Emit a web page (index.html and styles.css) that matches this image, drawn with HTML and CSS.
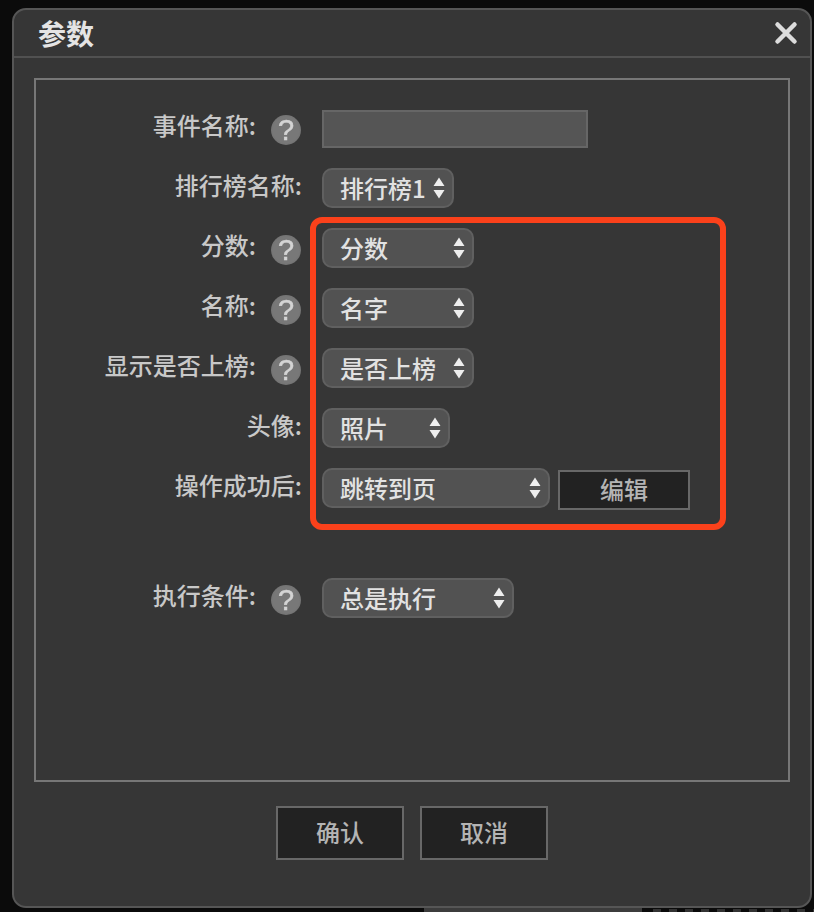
FILE: index.html
```html
<!DOCTYPE html>
<html lang="zh">
<head>
<meta charset="utf-8">
<title>参数</title>
<link rel="stylesheet" href="styles.css">
</head>
<body>
<div class="backdrop">
  <div class="under-bar"></div>
  <div class="under-dots"></div>
</div>
<div class="dialog">
  <header class="head">
    <h1 class="title">参数</h1>
    <svg class="close" width="24" height="24" viewBox="0 0 24 24"><path d="M3.500 3.500L20.500 20.500M20.500 3.500L3.500 20.500" stroke="#dcdcdc" stroke-width="4.500" stroke-linecap="round"/></svg>
  </header>
  <div class="panel">
    <div class="form">
      <div class="row">
        <div class="label"><span>事件名称:</span><span class="help">?</span></div>
        <input class="text-input" type="text">
      </div>
      <div class="row">
        <div class="label"><span>排行榜名称:</span></div>
        <div class="select w-132"><span>排行榜1</span><svg class="arrows" width="14" height="24" viewBox="0 0 14 24"><path d="M7 1.500L12.500 10H1.500Z M7 22.500L12.500 14H1.500Z" fill="#eee"/></svg></div>
      </div>
      <div class="row">
        <div class="label"><span>分数:</span><span class="help">?</span></div>
        <div class="select w-152"><span>分数</span><svg class="arrows" width="14" height="24" viewBox="0 0 14 24"><path d="M7 1.500L12.500 10H1.500Z M7 22.500L12.500 14H1.500Z" fill="#eee"/></svg></div>
      </div>
      <div class="row">
        <div class="label"><span>名称:</span><span class="help">?</span></div>
        <div class="select w-152"><span>名字</span><svg class="arrows" width="14" height="24" viewBox="0 0 14 24"><path d="M7 1.500L12.500 10H1.500Z M7 22.500L12.500 14H1.500Z" fill="#eee"/></svg></div>
      </div>
      <div class="row">
        <div class="label"><span>显示是否上榜:</span><span class="help">?</span></div>
        <div class="select w-152"><span>是否上榜</span><svg class="arrows" width="14" height="24" viewBox="0 0 14 24"><path d="M7 1.500L12.500 10H1.500Z M7 22.500L12.500 14H1.500Z" fill="#eee"/></svg></div>
      </div>
      <div class="row">
        <div class="label"><span>头像:</span></div>
        <div class="select w-128"><span>照片</span><svg class="arrows" width="14" height="24" viewBox="0 0 14 24"><path d="M7 1.500L12.500 10H1.500Z M7 22.500L12.500 14H1.500Z" fill="#eee"/></svg></div>
      </div>
      <div class="row">
        <div class="label"><span>操作成功后:</span></div>
        <div class="select w-228"><span>跳转到页</span><svg class="arrows" width="14" height="24" viewBox="0 0 14 24"><path d="M7 1.500L12.500 10H1.500Z M7 22.500L12.500 14H1.500Z" fill="#eee"/></svg></div>
        <button class="btn btn-edit" type="button">编辑</button>
      </div>
      <div class="row row-gap">
        <div class="label"><span>执行条件:</span><span class="help">?</span></div>
        <div class="select w-192"><span>总是执行</span><svg class="arrows" width="14" height="24" viewBox="0 0 14 24"><path d="M7 1.500L12.500 10H1.500Z M7 22.500L12.500 14H1.500Z" fill="#eee"/></svg></div>
      </div>
    </div>
    <div class="callout"></div>
  </div>
  <footer class="foot">
    <button class="btn btn-foot" type="button">确认</button>
    <button class="btn btn-foot" type="button">取消</button>
  </footer>
</div>
</body>
</html>
```
FILE: styles.css
```css
html, body {
  margin: 0;
  padding: 0;
  height: 912px;
  overflow: hidden;
  background: #0b0b0b;
  font-family: "Noto Sans CJK SC", "Liberation Sans", sans-serif;
}
.backdrop {
  position: absolute;
  inset: 0;
}
.under-bar {
  position: absolute;
  left: 424px;
  top: 906px;
  width: 218px;
  height: 6px;
  background: #3c3c3c;
}
.under-dots {
  position: absolute;
  left: 645px;
  top: 909px;
  width: 169px;
  height: 3px;
  background: repeating-linear-gradient(90deg, #0b0b0b 0 8px, #333 8px 16px);
}
.dialog {
  position: absolute;
  left: 12px;
  top: 8px;
  width: 800px;
  height: 900px;
  box-sizing: border-box;
  border: 2px solid #565656;
  border-radius: 14px;
  background: #363636;
  display: flex;
  flex-direction: column;
}
.head {
  height: 48px;
  flex: none;
  box-sizing: border-box;
  border-bottom: 2px solid #515151;
  display: flex;
  align-items: center;
  justify-content: space-between;
  padding: 0 12px 0 24px;
}
.title {
  margin: 0;
  font-size: 28px;
  font-weight: 700;
  line-height: 46px;
  color: #e4e4e4;
}
.close {
  display: block;
}
.panel {
  position: relative;
  margin: 20px 20px 0 20px;
  height: 704px;
  box-sizing: border-box;
  border: 2px solid #777;
}
.form {
  display: flex;
  flex-direction: column;
  gap: 20px;
  padding-top: 28px;
}
.row {
  display: flex;
  align-items: flex-start;
  height: 40px;
}
.row-gap {
  margin-top: 50px;
}
.label {
  width: 266px;
  margin-right: 20px;
  flex: none;
  display: flex;
  justify-content: flex-end;
  align-items: center;
  gap: 15px;
  height: 34px;
  font-size: 24px;
  font-weight: 500;
  line-height: 34px;
  color: #c8c8c8;
}
.help {
  width: 30px;
  height: 30px;
  margin: 10px 1px 0 0;
  border-radius: 50%;
  background: radial-gradient(circle, #787878 0 60%, #666 100%);
  color: #d4d4d4;
  font-family: "Liberation Sans", sans-serif;
  font-size: 29px;
  font-weight: 400;
  line-height: 30px;
  text-align: center;
  -webkit-text-stroke: 0.5px #d4d4d4;
  filter: blur(0.4px);
}
.text-input {
  box-sizing: border-box;
  width: 266px;
  height: 38px;
  margin: 2px 0 0;
  border: 2px solid #666;
  background: #555;
  padding: 0;
}
.select {
  box-sizing: border-box;
  height: 40px;
  border: 2px solid #606060;
  border-radius: 10px;
  background: #525252;
  display: flex;
  align-items: center;
  justify-content: space-between;
  padding: 0 6px 0 16px;
  font-size: 24px;
  font-weight: 500;
  line-height: 36px;
  color: #e2e2e2;
}
.w-132 { width: 132px; }
.w-152 { width: 152px; }
.w-128 { width: 128px; }
.w-228 { width: 228px; }
.w-192 { width: 192px; }
.arrows {
  display: block;
  flex: none;
}
.btn {
  box-sizing: border-box;
  border: 2px solid #686868;
  background: #222;
  color: #b4b4b4;
  font-family: inherit;
  font-size: 24px;
  font-weight: 500;
  line-height: 34px;
  padding: 0 0 2px;
}
.btn-edit {
  width: 132px;
  height: 40px;
  margin: 2px 0 0 8px;
}
.foot {
  display: flex;
  justify-content: center;
  gap: 16px;
  margin-top: 24px;
  padding-right: 16px;
  padding-left: 16px;
}
.btn-foot {
  width: 128px;
  height: 54px;
}
.callout {
  position: absolute;
  left: 274px;
  top: 137px;
  width: 416px;
  height: 313px;
  box-sizing: border-box;
  border: 6px solid #fb411b;
  border-radius: 12px;
}
```
